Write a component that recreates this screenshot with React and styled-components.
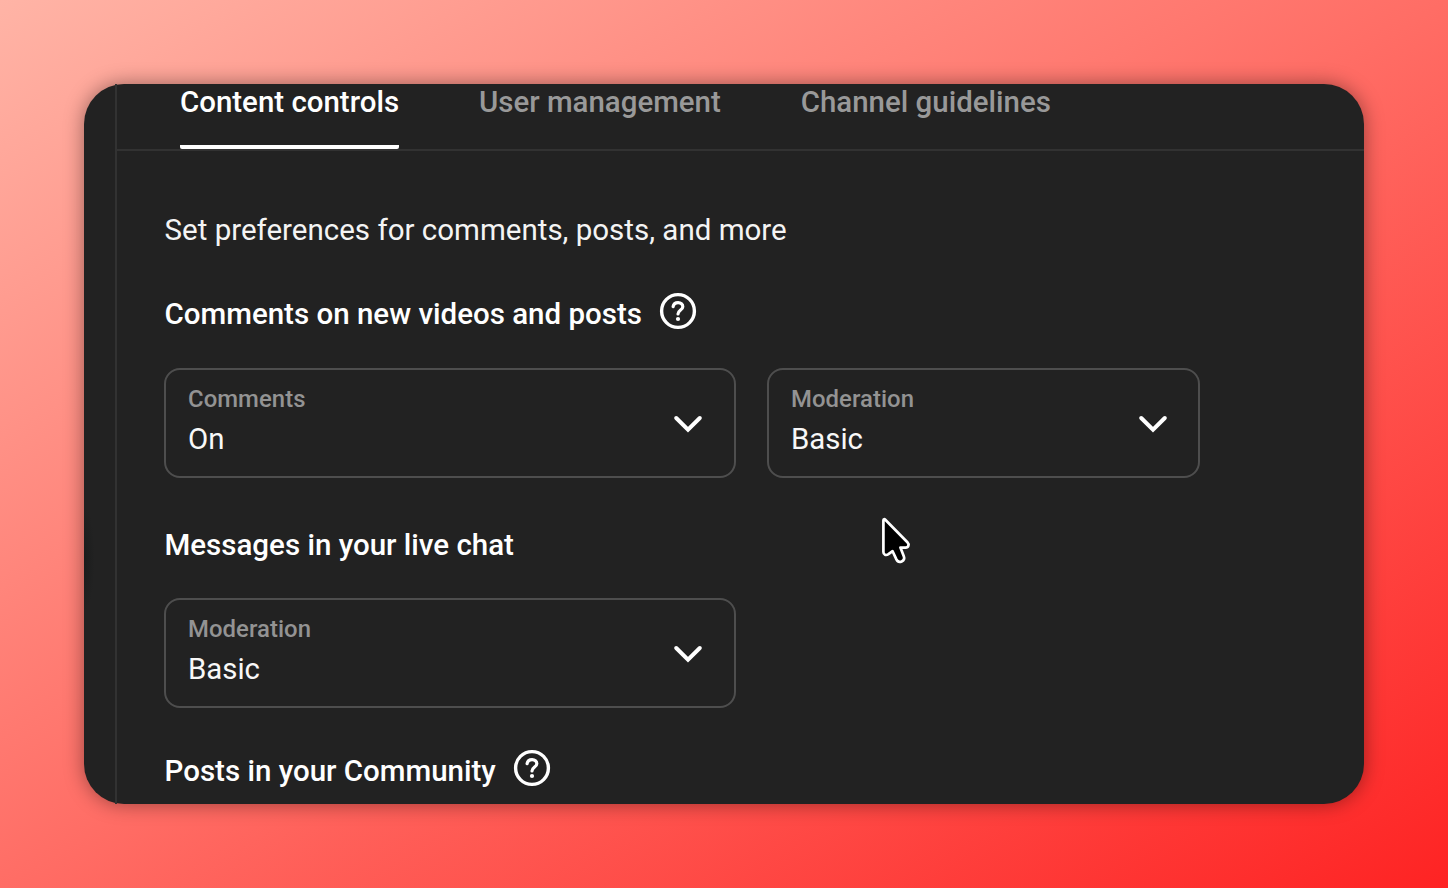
import React from "react";
import styled, { createGlobalStyle } from "styled-components";

const GlobalStyle = createGlobalStyle`
  * {
    box-sizing: border-box;
  }
  body {
    margin: 0;
    font-family: Roboto, sans-serif;
  }
`;

const Backdrop = styled.div`
  display: flex;
  width: 1448px;
  height: 888px;
  padding: 84px;
  overflow: hidden;
  background: linear-gradient(to bottom right, #ffb4a6, #ff6d65 50%, #fe2323);
`;

const Window = styled.div`
  position: relative;
  display: flex;
  flex: 1;
  border-radius: 40px;
  background: #222;
  box-shadow: 0 0 20px rgba(0, 0, 0, 0.4);
`;

const Rail = styled.div`
  display: flex;
  align-items: center;
  width: 31px;
  overflow: hidden;
`;

const RailShade = styled.div`
  width: 10px;
  height: 100px;
  margin-top: 230px;
  background: radial-gradient(ellipse at left, #1a1c1c, #222 75%);
`;

const Dialog = styled.main`
  flex: 1;
  overflow: hidden;
  border-left: 2px solid #323232;
  border-radius: 0 40px 40px 0;
`;

const TabBar = styled.nav`
  display: flex;
  gap: 80px;
  height: 67px;
  padding-left: 63px;
  border-bottom: 2px solid #323232;
`;

const Tab = styled.div`
  height: 65px;
  border-bottom: 4px solid ${props => (props.$active ? "#fff" : "transparent")};
  border-radius: 2px;
  color: ${props => (props.$active ? "#fff" : "#999")};
  font-size: 29.45px;
  font-weight: 500;
  line-height: 36px;
  white-space: nowrap;
`;

const Panel = styled.div`
  padding: 61px 0 0 47px;
`;

const Intro = styled.p`
  margin: 0 0 48px;
  padding-left: 0.5px;
  color: #f4f4f4;
  font-size: 29.5px;
  line-height: 36px;
`;

const Section = styled.section`
  margin-bottom: ${props => props.$gap}px;
`;

const Heading = styled.h2`
  display: flex;
  gap: 17px;
  height: 36px;
  margin: 0 0 ${props => props.$space}px;
  padding-left: 0.5px;
  color: #fff;
  font-size: 29.5px;
  font-weight: 500;
  line-height: 36px;
  white-space: nowrap;
`;

const Fields = styled.div`
  display: flex;
  gap: 31px;
`;

const Select = styled.div`
  display: flex;
  align-items: center;
  justify-content: space-between;
  width: ${props => props.$width}px;
  height: 110px;
  padding: 0 ${props => props.$inset}px 0 22px;
  border: 2px solid #4e4e4e;
  border-radius: 16px;
`;

const FieldText = styled.div`
  padding-bottom: 5px;
`;

const Label = styled.div`
  color: #939393;
  font-size: 23.9px;
  font-weight: 500;
  line-height: 36px;
  letter-spacing: 0.05px;
`;

const Value = styled.div`
  color: #f8f8f8;
  font-size: 29.4px;
  line-height: 44px;
`;

const HelpSvg = styled.svg`
  flex: none;
  margin-top: -4px;
`;

const ChevronSvg = styled.svg`
  margin-top: 2px;
`;

const Cursor = styled.svg`
  position: absolute;
  left: 796px;
  top: 431px;
`;

const HelpIcon = () => (
  <HelpSvg width="38" height="38" viewBox="0 0 38 38" fill="none">
    <circle cx="19" cy="19" r="16.4" stroke="#fff" strokeWidth="3.4" />
    <path
      d="M14.1 14.6C14.6 11.9 16.5 10.6 19.1 10.6C21.8 10.6 23.8 12.3 23.8 14.7C23.8 18 19 18 19 22"
      stroke="#fff"
      strokeWidth="3.2"
      strokeLinecap="round"
    />
    <circle cx="19" cy="27" r="2.1" fill="#fff" />
  </HelpSvg>
);

const Chevron = () => (
  <ChevronSvg width="30" height="20" viewBox="0 0 30 20" fill="none">
    <path
      d="M3.2 4L15 15.6L26.8 4"
      stroke="#fff"
      strokeWidth="4"
      strokeLinecap="round"
    />
  </ChevronSvg>
);

const tabs = [
  { name: "Content controls", active: true },
  { name: "User management" },
  { name: "Channel guidelines" }
];

const sections = [
  {
    title: "Comments on new videos and posts",
    help: true,
    space: 36,
    gap: 49,
    fields: [
      { label: "Comments", value: "On", width: 572, inset: 31 },
      { label: "Moderation", value: "Basic", width: 433, inset: 30 }
    ]
  },
  {
    title: "Messages in your live chat",
    space: 35,
    gap: 45,
    fields: [{ label: "Moderation", value: "Basic", width: 572, inset: 31 }]
  },
  {
    title: "Posts in your Community",
    help: true,
    space: 0,
    gap: 0,
    fields: []
  }
];

const App = () => (
  <>
    <GlobalStyle />
    <Backdrop>
      <Window>
        <Rail>
          <RailShade />
        </Rail>
        <Dialog>
          <TabBar>
            {tabs.map(d => (
              <Tab key={d.name} $active={d.active}>
                {d.name}
              </Tab>
            ))}
          </TabBar>
          <Panel>
            <Intro>Set preferences for comments, posts, and more</Intro>
            {sections.map(d => (
              <Section key={d.title} $gap={d.gap}>
                <Heading $space={d.space}>
                  {d.title}
                  {d.help && <HelpIcon />}
                </Heading>
                <Fields>
                  {d.fields.map(f => (
                    <Select key={f.label} $width={f.width} $inset={f.inset}>
                      <FieldText>
                        <Label>{f.label}</Label>
                        <Value>{f.value}</Value>
                      </FieldText>
                      <Chevron />
                    </Select>
                  ))}
                </Fields>
              </Section>
            ))}
          </Panel>
        </Dialog>
        <Cursor width="32" height="52" viewBox="0 0 32 52">
          <path
            d="M3.4 5.4C3.4 4 4.4 3.8 5.3 4.7L27.4 27.2C29.6 29.5 28.4 32.6 25.6 32.6H20.4L23.8 41.3C25.6 46 18.8 49.2 16.4 44.4L12.6 36.2L8.4 39.2C6 40.8 3.4 39.8 3.4 37Z"
            fill="#000"
            stroke="#fff"
            strokeWidth="2.7"
            strokeLinejoin="round"
          />
        </Cursor>
      </Window>
    </Backdrop>
  </>
);

export default App;
